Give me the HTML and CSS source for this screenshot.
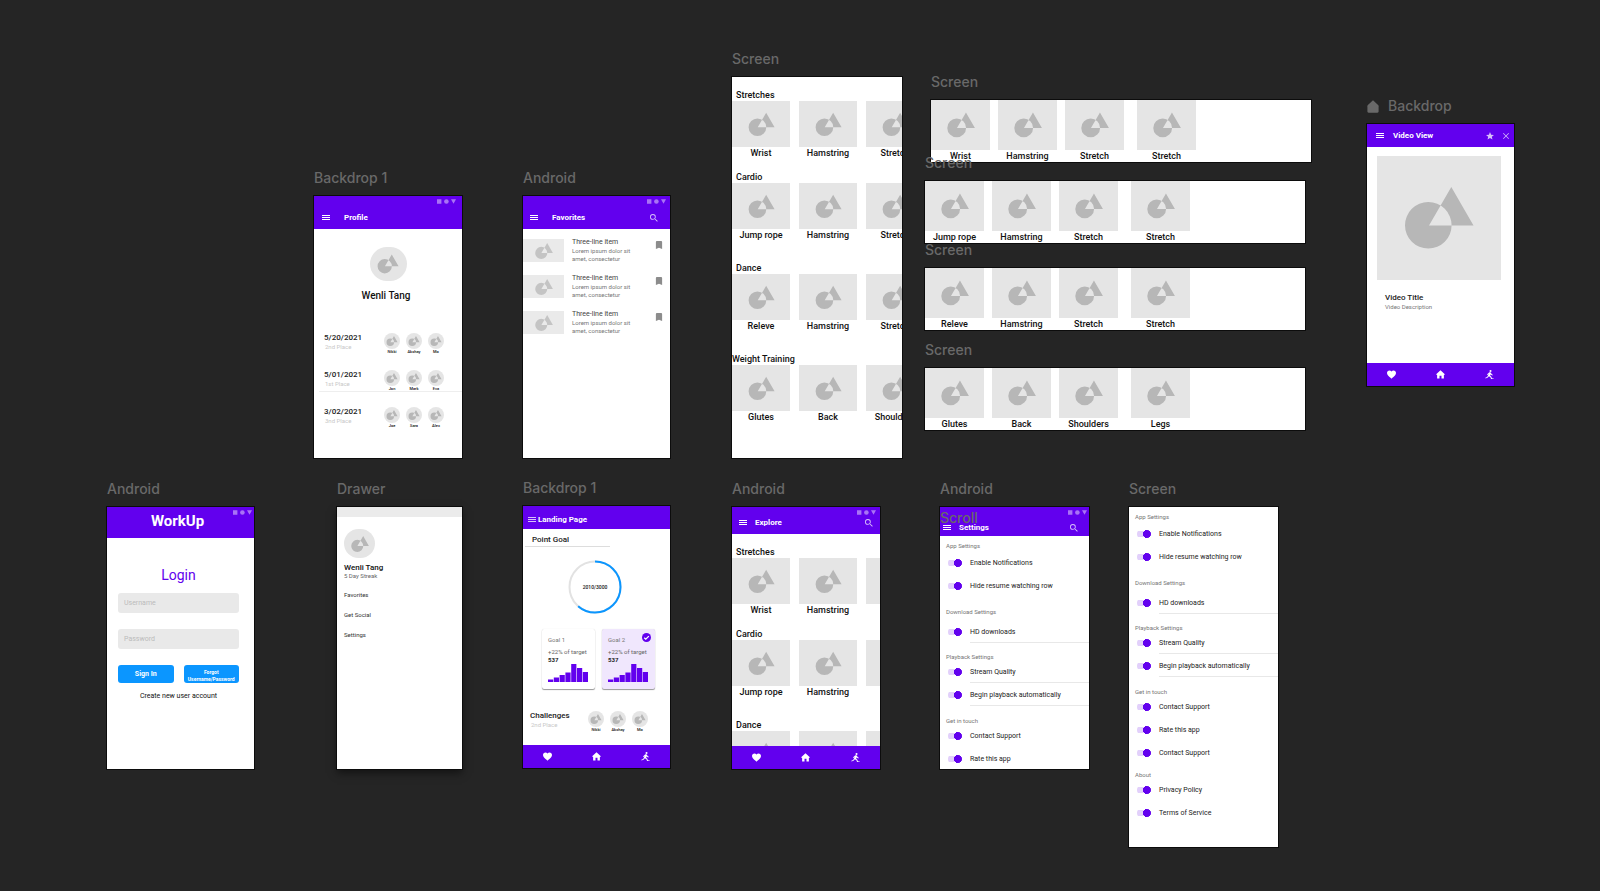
FILE: index.html
```html
<!DOCTYPE html>
<html lang="en">
<head>
<meta charset="utf-8">
<title>WorkUp – design canvas</title>
<link rel="stylesheet" href="styles.css">
</head>
<body>
<svg class="defs" aria-hidden="true">
  <symbol id="shape" viewBox="0 0 124 124"><path fill-rule="evenodd" d="M28 69.3a23.3 23.3 0 1 0 46.6 0a23.3 23.3 0 1 0-46.6 0ZM52 69.5L74.3 31L96.5 69.5Z"/></symbol>
  <symbol id="menu" viewBox="0 0 8 8"><path d="M0 1h8v1H0zM0 3h8v1H0zM0 5h8v1H0z"/></symbol>
  <symbol id="search" viewBox="3 3 18 18"><path d="M15.5 14h-.79l-.28-.27A6.47 6.47 0 0 0 16 9.5 6.5 6.5 0 1 0 9.5 16c1.61 0 3.09-.59 4.23-1.57l.27.28v.79l5 4.99L20.49 19l-4.99-5zm-6 0C7.01 14 5 11.99 5 9.5S7.01 5 9.5 5 14 7.01 14 9.5 11.99 14 9.5 14z"/></symbol>
  <symbol id="status" viewBox="0 0 19 5"><path d="M0 .3h4.4v4.4H0zM14 .3h5L16.5 4.8z"/><circle cx="9.4" cy="2.5" r="2.3"/></symbol>
  <symbol id="heart" viewBox="2 2 20 20"><path d="M12 21.35l-1.45-1.32C5.4 15.36 2 12.28 2 8.5 2 5.42 4.42 3 7.5 3c1.74 0 3.41.81 4.5 2.09C13.09 3.81 14.76 3 16.5 3 19.58 3 22 5.42 22 8.5c0 3.78-3.4 6.86-8.55 11.54L12 21.35z"/></symbol>
  <symbol id="home" viewBox="2 2 20 20"><path d="M12 2.5L3 11v2h1.500v8h5.300v-6h4.400v6h5.300v-8H21v-2z"/></symbol>
  <symbol id="run" viewBox="1 1 22 22"><circle cx="14.500" cy="3.600" r="2.500"/><path d="M11.500 6.500l4 .5 1.500 4 3 1.500-.8 1.800-4-1.800-.6-1.200-1 3.700 2.900 2.500 2 5.500h-2.600l-1.700-4.300-3.700-2.700-2.500 3.500L2.500 22l-.7-2 4.400-2 2.600-4.500.9-4-1.900 3.500-2-.8z"/><path d="M17 21h5v1.500h-5z"/></symbol>
  <symbol id="star" viewBox="2 2 20 20"><path d="M12 17.27L18.18 21l-1.64-7.03L22 9.24l-7.19-.61L12 2 9.19 8.63 2 9.24l5.46 4.73L5.82 21z"/></symbol>
  <symbol id="close" viewBox="5 5 14 14"><path d="M19 6.200L17.800 5 12 10.800 6.200 5 5 6.200 10.800 12 5 17.800 6.200 19 12 13.200 17.800 19 19 17.800 13.200 12z"/></symbol>
  <symbol id="bookmark" viewBox="5 3 14 18"><path d="M17 3H7c-1.100 0-2 .9-2 2v16l7-3 7 3V5c0-1.100-.9-2-2-2z"/></symbol>
  <symbol id="bars" viewBox="0 0 40 18"><path d="M0 15.500h5.200V18H0zM5.800 13.500H11V18H5.800zM11.600 11h5.200v7h-5.200zM17.400 8.500h5.200V18h-5.200zM23.200 0h5.200v18h-5.200zM29 4h5.200v14H29zM34.800 8H40v10h-5.200z"/></symbol>
</svg>

<main class="canvas">

  <section class="board board-profile">
    <h2 class="board-name">Backdrop 1</h2>
    <div class="frame">
      <header class="bar bar-tall">
        <svg class="status"><use href="#status"/></svg>
        <button class="icon-btn" aria-label="Menu"><svg class="icon"><use href="#menu"/></svg></button>
        <h3 class="bar-title">Profile</h3>
      </header>
      <div class="profile">
        <div class="avatar avatar-lg"><svg><use href="#shape"/></svg></div>
        <p class="profile-name">Wenli Tang</p>
        <div class="result">
          <div><p class="result-title">5/20/2021</p><p class="result-place">2nd Place</p></div>
          <ul class="people"><li><span class="avatar avatar-sm"><svg><use href="#shape"/></svg></span>Nikki</li><li><span class="avatar avatar-sm"><svg><use href="#shape"/></svg></span>Akshay</li><li><span class="avatar avatar-sm"><svg><use href="#shape"/></svg></span>Mo</li></ul>
        </div>
        <div class="result result-lined">
          <div><p class="result-title">5/01/2021</p><p class="result-place">1st Place</p></div>
          <ul class="people"><li><span class="avatar avatar-sm"><svg><use href="#shape"/></svg></span>Jon</li><li><span class="avatar avatar-sm"><svg><use href="#shape"/></svg></span>Mark</li><li><span class="avatar avatar-sm"><svg><use href="#shape"/></svg></span>Eva</li></ul>
        </div>
        <div class="result">
          <div><p class="result-title">3/02/2021</p><p class="result-place">3nd Place</p></div>
          <ul class="people"><li><span class="avatar avatar-sm"><svg><use href="#shape"/></svg></span>Joe</li><li><span class="avatar avatar-sm"><svg><use href="#shape"/></svg></span>Sara</li><li><span class="avatar avatar-sm"><svg><use href="#shape"/></svg></span>Alex</li></ul>
        </div>
      </div>
    </div>
  </section>

  <section class="board board-favorites">
    <h2 class="board-name">Android</h2>
    <div class="frame">
      <header class="bar bar-tall bar-favorites">
        <svg class="status"><use href="#status"/></svg>
        <button class="icon-btn" aria-label="Menu"><svg class="icon"><use href="#menu"/></svg></button>
        <h3 class="bar-title">Favorites</h3>
        <button class="icon-btn icon-soft push" aria-label="Search"><svg class="icon"><use href="#search"/></svg></button>
      </header>
      <ul class="favorites">
        <li class="favorite"><span class="thumb thumb-sm"><svg><use href="#shape"/></svg></span><div><p class="favorite-title">Three-line item</p><p class="favorite-text">Lorem ipsum dolor sit<br>amet, consectetur</p></div><button class="icon-btn bookmark" aria-label="Bookmark"><svg class="icon"><use href="#bookmark"/></svg></button></li>
        <li class="favorite"><span class="thumb thumb-sm"><svg><use href="#shape"/></svg></span><div><p class="favorite-title">Three-line item</p><p class="favorite-text">Lorem ipsum dolor sit<br>amet, consectetur</p></div><button class="icon-btn bookmark" aria-label="Bookmark"><svg class="icon"><use href="#bookmark"/></svg></button></li>
        <li class="favorite"><span class="thumb thumb-sm"><svg><use href="#shape"/></svg></span><div><p class="favorite-title">Three-line item</p><p class="favorite-text">Lorem ipsum dolor sit<br>amet, consectetur</p></div><button class="icon-btn bookmark" aria-label="Bookmark"><svg class="icon"><use href="#bookmark"/></svg></button></li>
      </ul>
    </div>
  </section>

  <section class="board board-catalog">
    <h2 class="board-name">Screen</h2>
    <div class="frame frame-catalog">
      <div class="catalog">
        <section class="shelf shelf-near"><h3 class="shelf-title">Stretches</h3>
          <div class="cards"><figure class="card"><span class="thumb"><svg><use href="#shape"/></svg></span><figcaption>Wrist</figcaption></figure><figure class="card"><span class="thumb"><svg><use href="#shape"/></svg></span><figcaption>Hamstring</figcaption></figure><figure class="card"><span class="thumb"><svg><use href="#shape"/></svg></span><figcaption>Stretch</figcaption></figure></div></section>
        <section class="shelf"><h3 class="shelf-title">Cardio</h3>
          <div class="cards"><figure class="card"><span class="thumb"><svg><use href="#shape"/></svg></span><figcaption>Jump rope</figcaption></figure><figure class="card"><span class="thumb"><svg><use href="#shape"/></svg></span><figcaption>Hamstring</figcaption></figure><figure class="card"><span class="thumb"><svg><use href="#shape"/></svg></span><figcaption>Stretch</figcaption></figure></div></section>
        <section class="shelf"><h3 class="shelf-title">Dance</h3>
          <div class="cards"><figure class="card"><span class="thumb"><svg><use href="#shape"/></svg></span><figcaption>Releve</figcaption></figure><figure class="card"><span class="thumb"><svg><use href="#shape"/></svg></span><figcaption>Hamstring</figcaption></figure><figure class="card"><span class="thumb"><svg><use href="#shape"/></svg></span><figcaption>Stretch</figcaption></figure></div></section>
        <section class="shelf"><h3 class="shelf-title shelf-title-flush">Weight Training</h3>
          <div class="cards"><figure class="card"><span class="thumb"><svg><use href="#shape"/></svg></span><figcaption>Glutes</figcaption></figure><figure class="card"><span class="thumb"><svg><use href="#shape"/></svg></span><figcaption>Back</figcaption></figure><figure class="card"><span class="thumb"><svg><use href="#shape"/></svg></span><figcaption>Shoulders</figcaption></figure></div></section>
      </div>
    </div>
  </section>

  <section class="board board-strip strip-1">
    <h2 class="board-name">Screen</h2>
    <div class="frame strip"><div class="cards cards-strip"><figure class="card"><span class="thumb"><svg><use href="#shape"/></svg></span><figcaption>Wrist</figcaption></figure><figure class="card"><span class="thumb"><svg><use href="#shape"/></svg></span><figcaption>Hamstring</figcaption></figure><figure class="card"><span class="thumb"><svg><use href="#shape"/></svg></span><figcaption>Stretch</figcaption></figure><figure class="card"><span class="thumb"><svg><use href="#shape"/></svg></span><figcaption>Stretch</figcaption></figure></div></div>
  </section>
  <section class="board board-strip strip-2">
    <h2 class="board-name">Screen</h2>
    <div class="frame strip"><div class="cards cards-strip"><figure class="card"><span class="thumb"><svg><use href="#shape"/></svg></span><figcaption>Jump rope</figcaption></figure><figure class="card"><span class="thumb"><svg><use href="#shape"/></svg></span><figcaption>Hamstring</figcaption></figure><figure class="card"><span class="thumb"><svg><use href="#shape"/></svg></span><figcaption>Stretch</figcaption></figure><figure class="card"><span class="thumb"><svg><use href="#shape"/></svg></span><figcaption>Stretch</figcaption></figure></div></div>
  </section>
  <section class="board board-strip strip-3">
    <h2 class="board-name">Screen</h2>
    <div class="frame strip"><div class="cards cards-strip"><figure class="card"><span class="thumb"><svg><use href="#shape"/></svg></span><figcaption>Releve</figcaption></figure><figure class="card"><span class="thumb"><svg><use href="#shape"/></svg></span><figcaption>Hamstring</figcaption></figure><figure class="card"><span class="thumb"><svg><use href="#shape"/></svg></span><figcaption>Stretch</figcaption></figure><figure class="card"><span class="thumb"><svg><use href="#shape"/></svg></span><figcaption>Stretch</figcaption></figure></div></div>
  </section>
  <section class="board board-strip strip-4">
    <h2 class="board-name">Screen</h2>
    <div class="frame strip"><div class="cards cards-strip"><figure class="card"><span class="thumb"><svg><use href="#shape"/></svg></span><figcaption>Glutes</figcaption></figure><figure class="card"><span class="thumb"><svg><use href="#shape"/></svg></span><figcaption>Back</figcaption></figure><figure class="card"><span class="thumb"><svg><use href="#shape"/></svg></span><figcaption>Shoulders</figcaption></figure><figure class="card"><span class="thumb"><svg><use href="#shape"/></svg></span><figcaption>Legs</figcaption></figure></div></div>
  </section>

  <section class="board board-video">
    <h2 class="board-name"><svg class="board-icon" viewBox="0 0 12 13"><path d="M6 .3L.9 5Q.4 5.500.4 6.200V11.600Q.4 12.700 1.500 12.700H10.500Q11.600 12.700 11.600 11.600V6.200Q11.600 5.500 11.100 5z"/></svg>Backdrop</h2>
    <div class="frame">
      <header class="bar bar-video">
        <button class="icon-btn" aria-label="Menu"><svg class="icon"><use href="#menu"/></svg></button>
        <h3 class="bar-title">Video View</h3>
        <button class="icon-btn icon-soft push" aria-label="Favorite"><svg class="icon"><use href="#star"/></svg></button>
        <button class="icon-btn icon-soft icon-close" aria-label="Close"><svg class="icon"><use href="#close"/></svg></button>
      </header>
      <div class="video">
        <div class="video-still"><svg><use href="#shape"/></svg></div>
        <h4 class="video-title">Video Title</h4>
        <p class="video-text">Video Description</p>
      </div>
      <nav class="nav"><a href="#favorites" aria-label="Favorites"><svg class="icon"><use href="#heart"/></svg></a><a href="#home" aria-label="Home"><svg class="icon"><use href="#home"/></svg></a><a href="#explore" aria-label="Explore"><svg class="icon"><use href="#run"/></svg></a></nav>
    </div>
  </section>

  <section class="board board-login">
    <h2 class="board-name">Android</h2>
    <div class="frame">
      <header class="bar bar-brand">
        <svg class="status"><use href="#status"/></svg>
        <h3 class="brand">WorkUp</h3>
      </header>
      <form class="login">
        <h4 class="login-title">Login</h4>
        <input class="field" type="text" placeholder="Username" aria-label="Username">
        <input class="field" type="password" placeholder="Password" aria-label="Password">
        <div class="login-actions">
          <button class="btn" type="button">Sign In</button>
          <button class="btn btn-small" type="button">Forgot<br>Username/Password</button>
        </div>
        <a class="login-link" href="#signup">Create new user account</a>
      </form>
    </div>
  </section>

  <section class="board board-drawer">
    <h2 class="board-name">Drawer</h2>
    <div class="frame frame-raised">
      <div class="drawer-top"></div>
      <div class="drawer">
        <div class="avatar avatar-md"><svg><use href="#shape"/></svg></div>
        <p class="drawer-name">Wenli Tang</p>
        <p class="drawer-streak">5 Day Streak</p>
        <nav class="drawer-nav"><a href="#favorites">Favorites</a><a href="#social">Get Social</a><a href="#settings">Settings</a></nav>
      </div>
    </div>
  </section>

  <section class="board board-landing">
    <h2 class="board-name">Backdrop 1</h2>
    <div class="frame">
      <header class="bar bar-landing">
        <button class="icon-btn icon-soft" aria-label="Menu"><svg class="icon"><use href="#menu"/></svg></button>
        <h3 class="bar-title">Landing Page</h3>
      </header>
      <div class="landing">
        <h4 class="landing-title">Point Goal</h4>
        <div class="ring">
          <svg viewBox="0 0 54 54"><circle class="ring-track" cx="27" cy="27" r="25.500"/><circle class="ring-value" cx="27" cy="27" r="25.500" pathLength="100" stroke-dasharray="61.500 100" transform="rotate(-90 27 27)"/></svg>
          <span>2010/3000</span>
        </div>
        <div class="goals">
          <article class="goal"><h5>Goal 1</h5><p>+22% of target</p><strong>537</strong><svg class="goal-bars"><use href="#bars"/></svg></article>
          <article class="goal goal-done"><h5>Goal 2</h5><p>+22% of target</p><strong>537</strong><svg class="goal-bars"><use href="#bars"/></svg><svg class="goal-check" viewBox="0 0 10 10"><circle cx="5" cy="5" r="5"/><path d="M2.500 5.200L4.200 6.900L7.600 3.500"/></svg></article>
        </div>
        <div class="result result-challenge">
          <div><p class="result-title">Challenges</p><p class="result-place">2nd Place</p></div>
          <ul class="people"><li><span class="avatar avatar-sm"><svg><use href="#shape"/></svg></span>Nikki</li><li><span class="avatar avatar-sm"><svg><use href="#shape"/></svg></span>Akshay</li><li><span class="avatar avatar-sm"><svg><use href="#shape"/></svg></span>Mo</li></ul>
        </div>
      </div>
      <nav class="nav"><a href="#favorites" aria-label="Favorites"><svg class="icon"><use href="#heart"/></svg></a><a href="#home" aria-label="Home"><svg class="icon"><use href="#home"/></svg></a><a href="#explore" aria-label="Explore"><svg class="icon"><use href="#run"/></svg></a></nav>
    </div>
  </section>

  <section class="board board-explore">
    <h2 class="board-name">Android</h2>
    <div class="frame frame-fixed">
      <header class="bar bar-explore">
        <svg class="status"><use href="#status"/></svg>
        <button class="icon-btn" aria-label="Menu"><svg class="icon"><use href="#menu"/></svg></button>
        <h3 class="bar-title">Explore</h3>
        <button class="icon-btn icon-soft push" aria-label="Search"><svg class="icon"><use href="#search"/></svg></button>
      </header>
      <div class="catalog catalog-clip">
        <section class="shelf shelf-near"><h3 class="shelf-title">Stretches</h3>
          <div class="cards"><figure class="card"><span class="thumb"><svg><use href="#shape"/></svg></span><figcaption>Wrist</figcaption></figure><figure class="card"><span class="thumb"><svg><use href="#shape"/></svg></span><figcaption>Hamstring</figcaption></figure><figure class="card"><span class="thumb"></span></figure></div></section>
        <section class="shelf"><h3 class="shelf-title">Cardio</h3>
          <div class="cards"><figure class="card"><span class="thumb"><svg><use href="#shape"/></svg></span><figcaption>Jump rope</figcaption></figure><figure class="card"><span class="thumb"><svg><use href="#shape"/></svg></span><figcaption>Hamstring</figcaption></figure><figure class="card"><span class="thumb"></span></figure></div></section>
        <section class="shelf"><h3 class="shelf-title">Dance</h3>
          <div class="cards"><figure class="card"><span class="thumb"><svg><use href="#shape"/></svg></span></figure><figure class="card"><span class="thumb"><svg><use href="#shape"/></svg></span></figure><figure class="card"><span class="thumb"></span></figure></div></section>
      </div>
      <nav class="nav"><a href="#favorites" aria-label="Favorites"><svg class="icon"><use href="#heart"/></svg></a><a href="#home" aria-label="Home"><svg class="icon"><use href="#home"/></svg></a><a href="#explore" aria-label="Explore"><svg class="icon"><use href="#run"/></svg></a></nav>
    </div>
  </section>

  <section class="board board-settings">
    <h2 class="board-name">Android</h2>
    <div class="frame frame-fixed">
      <header class="bar bar-settings">
        <svg class="status"><use href="#status"/></svg>
        <button class="icon-btn" aria-label="Menu"><svg class="icon"><use href="#menu"/></svg></button>
        <h3 class="bar-title">Settings</h3>
        <button class="icon-btn icon-soft push" aria-label="Search"><svg class="icon"><use href="#search"/></svg></button>
      </header>
      <div class="settings">
        <section class="group group-app"><h4>App Settings</h4>
          <label class="option"><input class="switch" type="checkbox" checked><span>Enable Notifications</span></label>
          <label class="option"><input class="switch" type="checkbox" checked><span>Hide resume watching row</span></label></section>
        <section class="group group-download"><h4>Download Settings</h4>
          <label class="option lined"><input class="switch" type="checkbox" checked><span>HD downloads</span></label></section>
        <section class="group group-playback"><h4>Playback Settings</h4>
          <label class="option lined"><input class="switch" type="checkbox" checked><span>Stream Quality</span></label>
          <label class="option lined"><input class="switch" type="checkbox" checked><span>Begin playback automatically</span></label></section>
        <section class="group group-touch"><h4>Get in touch</h4>
          <label class="option"><input class="switch" type="checkbox" checked><span>Contact Support</span></label>
          <label class="option"><input class="switch" type="checkbox" checked><span>Rate this app</span></label></section>
      </div>
    </div>
    <h2 class="board-name scroll-name">Scroll</h2>
  </section>

  <section class="board board-options">
    <h2 class="board-name">Screen</h2>
    <div class="frame">
      <div class="settings">
        <section class="group group-app"><h4>App Settings</h4>
          <label class="option"><input class="switch" type="checkbox" checked><span>Enable Notifications</span></label>
          <label class="option"><input class="switch" type="checkbox" checked><span>Hide resume watching row</span></label></section>
        <section class="group group-download"><h4>Download Settings</h4>
          <label class="option lined"><input class="switch" type="checkbox" checked><span>HD downloads</span></label></section>
        <section class="group group-playback"><h4>Playback Settings</h4>
          <label class="option lined"><input class="switch" type="checkbox" checked><span>Stream Quality</span></label>
          <label class="option lined"><input class="switch" type="checkbox" checked><span>Begin playback automatically</span></label></section>
        <section class="group group-touch"><h4>Get in touch</h4>
          <label class="option"><input class="switch" type="checkbox" checked><span>Contact Support</span></label>
          <label class="option"><input class="switch" type="checkbox" checked><span>Rate this app</span></label>
          <label class="option"><input class="switch" type="checkbox" checked><span>Contact Support</span></label></section>
        <section class="group group-about"><h4>About</h4>
          <label class="option"><input class="switch" type="checkbox" checked><span>Privacy Policy</span></label>
          <label class="option"><input class="switch" type="checkbox" checked><span>Terms of Service</span></label></section>
      </div>
    </div>
  </section>

</main>
</body>
</html>
```

FILE: styles.css
```css
:root {
  --purple: #6200ee;
  --canvas: #252525;
  --label: #696969;
  --tile: #e5e5e5;
  --shape: #b7b7b7;
}

* { box-sizing: border-box; }

body {
  margin: 0;
  background: var(--canvas);
  font-family: Roboto, "Liberation Sans", sans-serif;
  color: #111;
}

h2, h3, h4, h5, p, ul, figure { margin: 0; padding: 0; font-weight: 400; }
ul { list-style: none; }
a { color: inherit; text-decoration: none; }
svg { display: block; fill: currentColor; }
button, input { font-family: inherit; border: 0; padding: 0; margin: 0; }

.defs { position: absolute; width: 0; height: 0; }

.canvas { position: relative; min-height: 100vh; overflow: hidden; }

/* Boards sit freely on the canvas */
.board { position: absolute; width: 147px; }
.board-profile { left: 314px; top: 168px; width: 148px; }
.board-favorites { left: 523px; top: 168px; }
.board-catalog { left: 732px; top: 49px; width: 170px; }
.board-strip { width: 380px; }
.strip-1 { left: 931px; top: 72px; }
.strip-2 { left: 925px; top: 153px; }
.strip-3 { left: 925px; top: 240px; }
.strip-4 { left: 925px; top: 340px; }
.board-video { left: 1367px; top: 96px; }
.board-login { left: 107px; top: 479px; }
.board-drawer { left: 337px; top: 479px; width: 125px; }
.board-landing { left: 523px; top: 478px; }
.board-explore { left: 732px; top: 479px; width: 148px; }
.board-settings { left: 940px; top: 479px; width: 149px; }
.board-options { left: 1129px; top: 479px; width: 149px; }

.board-name {
  display: flex;
  align-items: center;
  gap: 9px;
  height: 20px;
  margin-bottom: 8px;
  font: 500 14px/20px Inter, "Liberation Sans", sans-serif;
  color: var(--label);
}
.board-icon { width: 12px; height: 13px; }
.scroll-name { position: absolute; left: 0; top: 29px; margin: 0; }

.frame {
  display: flex;
  flex-direction: column;
  min-height: 262px;
  background: #fff;
  box-shadow: 0 0 0 1px #0c0c0c;
  overflow: hidden;
}
.frame-catalog { min-height: 381px; }
.frame-fixed { height: 262px; }
.frame-raised { box-shadow: 0 0 0 1px #0c0c0c, 0 4px 8px rgba(0, 0, 0, .5); }
.board-options .frame { min-height: 340px; }
.strip { min-height: 62px; }

/* App bars */
.bar {
  position: relative;
  flex: none;
  display: flex;
  align-items: center;
  background: var(--purple);
  color: #fff;
}
.bar-tall { height: 33px; padding: 12px 12px 1px 8px; gap: 14px; }
.bar-favorites { padding-left: 7px; }
.bar-video { height: 23px; padding: 1px 5px 0 9px; gap: 9px; }
.bar-brand { height: 31px; justify-content: center; padding-right: 6px; padding-bottom: 3px; }
.bar-landing { height: 23px; padding: 5px 5px 0; gap: 2px; }
.bar-explore { height: 27px; padding: 5px 7px 0; gap: 8px; }
.bar-settings { height: 29px; padding: 13px 11px 0 3px; gap: 8px; }
.bar-title { font-size: 8px; line-height: 10px; font-weight: 700; }
.brand { font-size: 15px; line-height: 18px; font-weight: 700; }
.status { position: absolute; top: 3px; right: 4px; width: 19px; height: 5px; opacity: .45; }
.board-profile .status { right: 6px; }
.bar-brand .status, .bar-settings .status { right: 2px; }
.push { margin-left: auto; }

.icon-btn { flex: none; background: none; color: inherit; line-height: 0; }
.icon { width: 8px; height: 8px; }
.icon-soft { opacity: .75; }
.icon-close .icon { width: 6px; height: 6px; }

.nav {
  flex: none;
  display: flex;
  align-items: center;
  justify-content: space-around;
  height: 23px;
  margin-top: auto;
  background: var(--purple);
  color: #fff;
}
.nav .icon { width: 9px; height: 9px; }

/* Placeholder pictures */
.thumb, .avatar, .video-still {
  display: flex;
  flex: none;
  align-items: center;
  justify-content: center;
  background: var(--tile);
  color: var(--shape);
  overflow: hidden;
}
.thumb { width: 58px; height: 46px; }
.thumb svg { flex: none; width: 47px; height: 47px; }
.cards-strip .thumb { width: 59px; height: 50px; }
.cards-strip .thumb svg { width: 50px; height: 50px; }
.favorite .thumb-sm { width: 41px; height: 23px; margin-top: 1px; background: #eaeaea; color: #c4c4c4; }
.thumb-sm svg { width: 32px; height: 32px; }
.avatar svg { flex: none; }
.avatar-lg { width: 37px; height: 34px; border-radius: 17px; }
.avatar-lg svg { width: 38px; height: 38px; }
.avatar-md { width: 31px; height: 29px; border-radius: 15px; }
.avatar-md svg { width: 32px; height: 32px; }
.avatar-sm { width: 16px; height: 16px; border-radius: 8px; }
.avatar-sm svg { width: 20px; height: 20px; }

/* Profile */
.profile { display: flex; flex-direction: column; padding-top: 18px; }
.profile .avatar-lg { align-self: center; }
.profile-name { margin: 9px 4px 31px 0; font-size: 10px; line-height: 12px; font-weight: 500; text-align: center; }
.result {
  display: flex;
  justify-content: space-between;
  height: 37px;
  margin-left: 5px;
  padding: 0 18px 0 5px;
}
.result-title { font-size: 8px; line-height: 10px; font-weight: 500; color: #222; }
.result-place { padding-left: 1px; font-size: 6px; line-height: 7px; color: #c8c8c8; }
.result-lined { position: relative; }
.result-lined::after { content: ""; position: absolute; left: 0; right: 0; top: 21px; height: 1px; background: #eee; }
.people { display: flex; gap: 6px; }
.people li { width: 16px; display: flex; flex-direction: column; align-items: center; font-size: 4px; line-height: 5px; font-weight: 500; }

/* Favorites */
.favorites { display: flex; flex-direction: column; padding: 9px 7px 0 0; }
.favorite { display: flex; align-items: flex-start; gap: 8px; height: 36px; }
.favorite-title { font-size: 7px; line-height: 9px; color: #444; }
.favorite-text { font-size: 6px; line-height: 8px; color: #777; }
.bookmark { margin: 3px 0 0 auto; color: #8c8c8c; }

/* Exercise shelves */
.catalog { padding-top: 12px; }
.catalog-clip { flex: 1; min-height: 0; overflow: hidden; }
.shelf { margin-bottom: 21px; }
.shelf-near { margin-bottom: 12px; }
.shelf-title { padding-left: 4px; font-size: 9px; line-height: 12px; font-weight: 500; }
.shelf-title-flush { padding-left: 0; }
.cards { display: flex; gap: 9px; }
.cards-strip { gap: 8px; }
.cards-strip .card:last-child { margin-left: 5px; }
.card { flex: none; }
.card figcaption { font-size: 9px; line-height: 12px; font-weight: 500; text-align: center; }

/* Video */
.video { padding: 9px 13px 0 10px; }
.video-still { aspect-ratio: 1; }
.video-still svg { width: 100%; height: 100%; }
.video-title { margin: 13px 0 0 8px; font-size: 8px; line-height: 10px; font-weight: 500; color: #222; }
.video-text { margin-left: 8px; font-size: 6px; line-height: 7px; color: #777; }

/* Login */
.login { display: flex; flex-direction: column; padding: 29px 15px 0 11px; }
.login-title { margin-bottom: 10px; font-size: 14px; line-height: 16px; color: var(--purple); text-align: center; }
.field { width: 100%; height: 20px; margin-bottom: 16px; padding: 0 6px; border-radius: 3px; background: #e9e9e9; font-size: 7px; }
.field::placeholder { color: #bbb; opacity: 1; }
.login-actions { display: grid; grid-template-columns: 1fr 1fr; gap: 10px; }
.btn { height: 18px; border-radius: 3px; background: #0b96ff; color: #fff; font-size: 7px; line-height: 7px; font-weight: 700; white-space: nowrap; }
.btn-small { padding-top: 3px; font-size: 5px; }
.login-link { margin-top: 9px; font-size: 7px; line-height: 9px; text-align: center; }

/* Drawer */
.drawer-top { height: 10px; background: #ebebeb; }
.drawer { padding: 12px 7px; }
.drawer-name { margin-top: 5px; font-size: 8px; line-height: 10px; font-weight: 500; }
.drawer-streak { font-size: 6px; line-height: 6px; color: #666; }
.drawer-nav { display: flex; flex-direction: column; gap: 12px; margin-top: 12px; font-size: 6px; line-height: 8px; color: #333; }

/* Landing */
.landing { display: flex; flex-direction: column; }
.landing-title { width: 85px; margin-left: 2px; padding: 6px 0 1px 7px; border-bottom: 1px solid #ddd; font-size: 8px; line-height: 10px; font-weight: 500; color: #222; }
.ring { position: relative; align-self: center; width: 54px; height: 54px; margin: 13px 3px 15px 0; }
.ring circle { fill: none; stroke-width: 2; }
.ring .ring-track { stroke: #e2e2e2; }
.ring .ring-value { stroke: #0b96ff; }
.ring span { position: absolute; inset: 0; display: grid; place-items: center; font-size: 5px; font-weight: 500; }
.goals { display: grid; grid-template-columns: 1fr 1fr; gap: 7px; padding: 0 15px 0 19px; }
.goal { position: relative; padding: 7px 6px; border-radius: 2px; box-shadow: 0 1px 1px rgba(0, 0, 0, .4), 0 0 1px rgba(0, 0, 0, .15); font-size: 6px; line-height: 8px; color: #666; white-space: nowrap; }
.goal h5 { margin-bottom: 4px; font-size: 6px; color: #777; }
.goal p { font-size: 6px; }
.goal strong { display: block; font-weight: 700; color: #222; }
.goal-done { background: #f0e7fd; }
.goal-bars { width: 40px; height: 18px; color: var(--purple); }
.goal-check { position: absolute; top: 4px; right: 4px; width: 9px; height: 9px; color: var(--purple); }
.goal-check path { fill: none; stroke: #fff; stroke-width: 1.4; }
.result-challenge { height: 30px; margin: 22px 0 0; padding: 0 22px 0 7px; }

/* Settings */
.settings { padding-top: 7px; }
.group h4 { padding-left: 6px; font-size: 6px; line-height: 6px; color: #757575; }
.group-app h4 { margin-bottom: 2px; }
.group-download h4 { margin: 12px 0 5px; }
.group-playback h4 { margin: 11px 0 0; }
.group-touch h4 { margin: 12px 0 0; }
.group-about h4 { margin: 8px 0 0; }
.option { display: flex; align-items: center; gap: 8px; height: 23px; padding-left: 8px; font-size: 7px; color: #222; }
.option span { flex: 1; padding-top: 2px; line-height: 20px; border-bottom: 1px solid transparent; white-space: nowrap; }
.lined span { border-bottom-color: #e8e8e8; }
.switch {
  appearance: none;
  flex: none;
  width: 14px;
  height: 8px;
  background:
    radial-gradient(circle at 10px 4px, var(--purple) 4px, transparent 4px),
    linear-gradient(#e2d0fb, #e2d0fb) 0 1px / 12px 6px no-repeat;
  border-radius: 4px;
}
```
